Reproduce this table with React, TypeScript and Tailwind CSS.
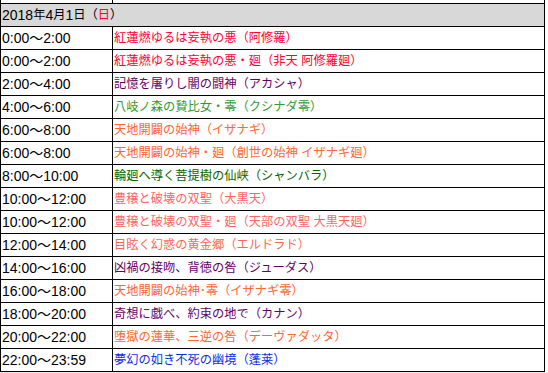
import React from 'react';

interface ScheduleRow {
  time: string;
  name: string;
  color: string;
}

const rows: ScheduleRow[] = [
  { time: '0:00〜2:00', name: '紅蓮燃ゆるは妄執の悪（阿修羅）', color: 'text-[#ff0033]' },
  { time: '0:00〜2:00', name: '紅蓮燃ゆるは妄執の悪・廻（非天 阿修羅廻）', color: 'text-[#ff0033]' },
  { time: '2:00〜4:00', name: '記憶を屠りし闇の闘神（アカシャ）', color: 'text-[#660066]' },
  { time: '4:00〜6:00', name: '八岐ノ森の贄比女・零（クシナダ零）', color: 'text-[#339933]' },
  { time: '6:00〜8:00', name: '天地開闢の始神（イザナギ）', color: 'text-[#ff6633]' },
  { time: '6:00〜8:00', name: '天地開闢の始神・廻（創世の始神 イザナギ廻）', color: 'text-[#ff6633]' },
  { time: '8:00〜10:00', name: '輪廻へ導く菩提樹の仙峡（シャンバラ）', color: 'text-[#006600]' },
  { time: '10:00〜12:00', name: '豊穣と破壊の双聖（大黒天）', color: 'text-[#ff6666]' },
  { time: '10:00〜12:00', name: '豊穣と破壊の双聖・廻（天部の双聖 大黒天廻）', color: 'text-[#ff6666]' },
  { time: '12:00〜14:00', name: '目眩く幻惑の黄金郷（エルドラド）', color: 'text-[#ff6655]' },
  { time: '14:00〜16:00', name: '凶禍の接吻、背徳の咎（ジューダス）', color: 'text-[#660066]' },
  { time: '16:00〜18:00', name: '天地開闢の始神･零（イザナギ零）', color: 'text-[#ff6633]' },
  { time: '18:00〜20:00', name: '奇想に戯べ、約束の地で（カナン）', color: 'text-[#660066]' },
  { time: '20:00〜22:00', name: '堕獄の蓮華、三逆の咎（デーヴァダッタ）', color: 'text-[#ff6633]' },
  { time: '22:00〜23:59', name: '夢幻の如き不死の幽境（蓬莱）', color: 'text-[#0a2fe6]' },
];

const cjk = 'text-[12.25px]';

export default function App() {
  return (
    <div className="min-h-screen bg-white font-['Liberation_Sans','Noto_Sans_CJK_JP',sans-serif] text-black">
      <div className="w-[545px] border-l border-black">
        {/* tail of the previous day's table */}
        <div className="flex h-[3px]">
          <div className="w-[112px] shrink-0 border-r border-black" />
          <div className="w-[432px] shrink-0 border-r border-black" />
        </div>

        <div className="flex h-[24px] items-center border-y border-r border-black bg-[#d8d8d8] pl-[1px] text-[14px] leading-none">
          2018<span className={cjk}>年</span>4<span className={cjk}>月</span>1<span className={cjk}>日（</span>
          <span className={`${cjk} text-[#ff0033]`}>日</span>
          <span className={cjk}>）</span>
        </div>

        {rows.map((row, i) => (
          <div key={i} className="flex h-[23px] border-b border-black leading-none">
            <div className="flex w-[112px] shrink-0 items-center border-r border-black pl-[1px] text-[14px]">
              {row.time}
            </div>
            <div className={`flex w-[432px] shrink-0 items-center border-r border-black pl-[1px] ${cjk} ${row.color}`}>
              {row.name}
            </div>
          </div>
        ))}
      </div>
      <div className="h-[2px] w-[545px] bg-[#e6e6e6]" />
    </div>
  );
}
